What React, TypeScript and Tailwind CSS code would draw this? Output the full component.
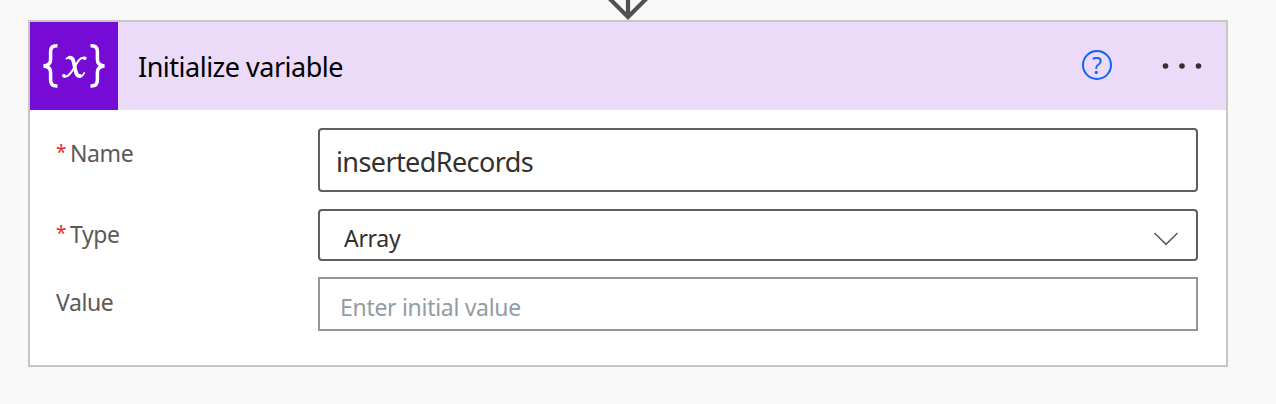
import React from "react";

function VariableIcon() {
  return (
    <svg width="88" height="88" viewBox="0 0 88 88" className="shrink-0 bg-[#770bd6]" fill="none" stroke="#fff">
      <path strokeWidth="3.5" d="M27.5 23.8H26.5Q20.6 23.8 20.6 29.5V37.5Q20.6 43.4 13.5 43.9Q20.6 44.4 20.6 50.3V58Q20.6 64 26.5 64H27.5" />
      <path strokeWidth="3.5" d="M60.5 23.8H61.5Q67.4 23.8 67.4 29.5V37.5Q67.4 43.4 74.5 43.9Q67.4 44.4 67.4 50.3V58Q67.4 64 61.5 64H60.5" />
      <g strokeLinecap="round">
        <path strokeWidth="3.8" d="M39.7 35.6C43.3 35.2 43.5 39 44.6 44.5C45.7 50.5 46.6 54.4 50 54" />
        <path strokeWidth="1.8" d="M36.4 36.6Q38.2 34.8 40.4 34.8M50.5 54.8Q53 54 54.2 51" />
        <path strokeWidth="1.9" d="M54.5 36C50.5 34.8 48 39 45 44.5C41.5 50.5 38 55.8 33.8 54.6" />
        <path strokeWidth="3.4" d="M54.3 36.3H54.9M33.7 53.8H34.1" />
      </g>
    </svg>
  );
}

function Label({ text, required }: { text: string; required?: boolean }) {
  return (
    <div className="flex w-[262px] shrink-0 pt-[9px] text-[23px] leading-[32px] text-[#5c5a58]">
      {required && <span className="w-[14px] shrink-0 text-[19px] leading-[30px] text-[#e8262c]">*</span>}
      <span className="tracking-[-0.4px]">{text}</span>
    </div>
  );
}

export default function App() {
  return (
    <div className="flex h-[404px] w-[1276px] flex-col overflow-hidden bg-[#f8f8f8] pl-[28px] font-['Noto_Sans','Open_Sans',sans-serif]">
      <svg width="44" height="20" viewBox="0 0 44 20" className="ml-[578px] shrink-0" fill="none" stroke="#505050" strokeWidth="4.2">
        <path d="M22 0V17M2 -3L22 17L42 -3" />
      </svg>
      <div className="h-[347px] w-[1200px] shrink-0 border-2 border-[#c8c6c5] bg-white">
        <div className="flex h-[88px] items-start bg-[#ebdbf8]">
          <VariableIcon />
          <span className="ml-[20px] mt-[25px] whitespace-nowrap text-[27px] leading-[40px] tracking-[-0.5px] text-black">
            Initialize variable
          </span>
          <div className="ml-auto mt-[28px] mr-[50px] flex h-[30px] w-[30px] items-center justify-center rounded-full border-2 border-[#0b62ff] text-[23px] leading-[26px] text-[#0b62ff]">
            <span>?</span>
          </div>
          <svg width="40" height="8" viewBox="0 0 40 8" className="mr-[24px] mt-[40px]" fill="#323130">
            <circle cx="3.5" cy="4" r="2.8" />
            <circle cx="20" cy="4" r="2.8" />
            <circle cx="36.5" cy="4" r="2.8" />
          </svg>
        </div>
        <div className="flex flex-col pl-[26px] pt-[18px]">
          <div className="flex h-[81px]">
            <Label text="Name" required />
            <div className="h-[64px] w-[880px] rounded-[4px] border-2 border-[#605e5c] pl-[16px] pt-[14px] text-[27px] leading-[36px] text-[#323130]">
              <span className="tracking-[-0.6px]">insertedRecords</span>
            </div>
          </div>
          <div className="flex h-[68px]">
            <Label text="Type" required />
            <div className="flex h-[52px] w-[880px] justify-between rounded-[4px] border-2 border-[#605e5c] pl-[24px] pr-[17px] pt-[10px] text-[23px] leading-[34px] text-[#323130]">
              <span className="tracking-[-0.3px]">Array</span>
              <svg width="26" height="16" viewBox="0 0 26 16" className="mt-[10px]" fill="none" stroke="#605e5c" strokeWidth="1.6">
                <path d="M1.5 2L13 13.3L24.5 2" />
              </svg>
            </div>
          </div>
          <div className="flex h-[54px]">
            <Label text="Value" />
            <div className="h-[54px] w-[880px] border-2 border-[#979593] pl-[20px] pt-[11px] text-[23px] leading-[34px] text-[#949ca4]">
              <span className="tracking-[-0.3px]">Enter initial value</span>
            </div>
          </div>
        </div>
      </div>
    </div>
  );
}
